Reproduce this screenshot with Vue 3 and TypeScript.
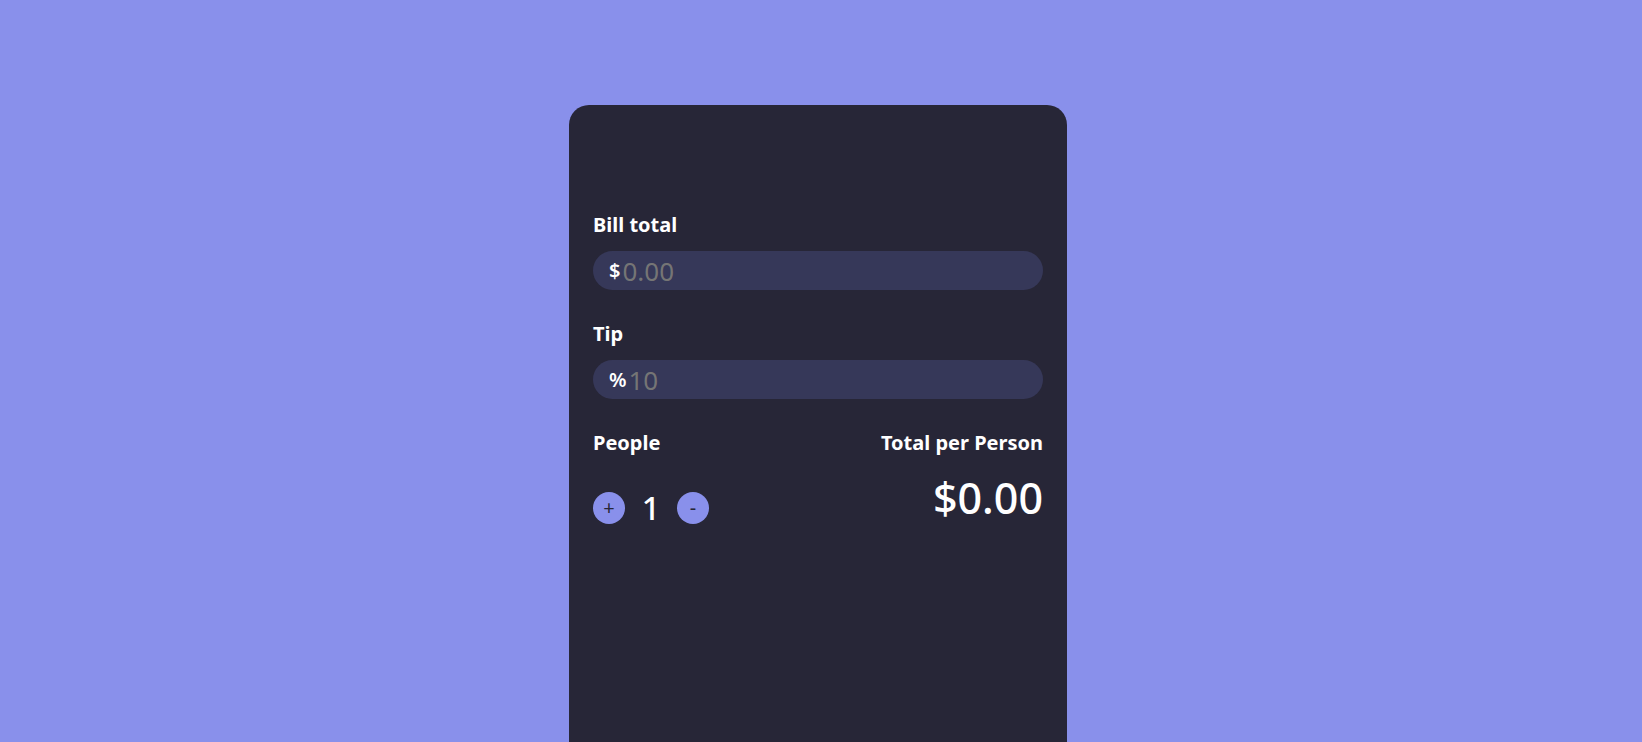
<script setup lang="ts">
import { computed, ref } from 'vue'

const bill = ref<number | ''>('')
const tip = ref<number | ''>('')
const people = ref(1)

const totalPerPerson = computed(() => {
  const amount = Number(bill.value) || 0
  const rate = Number(tip.value) || 0
  return ((amount * (1 + rate / 100)) / people.value).toFixed(2)
})

function addPerson() {
  people.value += 1
}

function removePerson() {
  if (people.value > 1) people.value -= 1
}
</script>

<template>
  <div class="page">
    <main class="card">
      <div class="group">
        <label class="label" for="bill">Bill total</label>
        <div class="field">
          <span class="unit">$</span>
          <input id="bill" v-model="bill" class="input" type="number" placeholder="0.00" />
        </div>
      </div>
      <div class="group">
        <label class="label" for="tip">Tip</label>
        <div class="field">
          <span class="unit">%</span>
          <input id="tip" v-model="tip" class="input" type="number" placeholder="10" />
        </div>
      </div>
      <div class="summary">
        <section>
          <h2 class="label">People</h2>
          <div class="counter">
            <button class="step" type="button" aria-label="Add person" @click="addPerson">+</button>
            <span class="count">{{ people }}</span>
            <button class="step" type="button" aria-label="Remove person" @click="removePerson">-</button>
          </div>
        </section>
        <section class="result">
          <h2 class="label">Total per Person</h2>
          <output class="total" for="bill tip">${{ totalPerPerson }}</output>
        </section>
      </div>
    </main>
  </div>
</template>

<style>
body {
  margin: 0;
  background: #8990eb;
}
</style>

<style scoped>
.page {
  box-sizing: border-box;
  display: flex;
  justify-content: center;
  min-height: 100vh;
  padding: 105px 6px 0 0;
  background: #8990eb;
  color: #fff;
  font-family: 'Noto Sans', 'Open Sans', sans-serif;
}

.card {
  box-sizing: border-box;
  width: 100%;
  max-width: 498px;
  padding: 104px 24px 24px;
  border-radius: 20px 20px 0 0;
  background: #272637;
}

.group {
  margin-bottom: 28px;
}

.label {
  display: block;
  margin: 0;
  font-size: 20px;
  font-weight: 700;
  line-height: 32px;
}

.field {
  display: flex;
  align-items: center;
  gap: 2px;
  height: 39px;
  margin-top: 10px;
  padding: 0 16px;
  border-radius: 20px;
  background: #363859;
}

.unit {
  font-size: 20px;
  font-weight: 600;
}

.input {
  flex: 1;
  min-width: 0;
  padding: 0;
  border: 0;
  outline: 0;
  background: transparent;
  color: #fff;
  font: inherit;
  font-size: 26px;
  line-height: 36px;
  appearance: textfield;
}

.input::placeholder {
  color: #757575;
  opacity: 1;
}

.summary {
  display: flex;
  justify-content: space-between;
}

.counter {
  display: flex;
  align-items: center;
  gap: 16px;
  margin-top: 33px;
}

.step {
  width: 32px;
  height: 32px;
  padding: 0;
  border: 0;
  border-radius: 50%;
  background: #8990eb;
  color: #272637;
  font: inherit;
  font-size: 20px;
  line-height: 32px;
  cursor: pointer;
}

.count {
  min-width: 20px;
  font-size: 32px;
  font-weight: 500;
  line-height: 32px;
  text-align: center;
}

.result {
  text-align: right;
}

.total {
  display: block;
  margin-top: 15px;
  font-size: 43px;
  font-weight: 500;
  line-height: 48px;
}
</style>
